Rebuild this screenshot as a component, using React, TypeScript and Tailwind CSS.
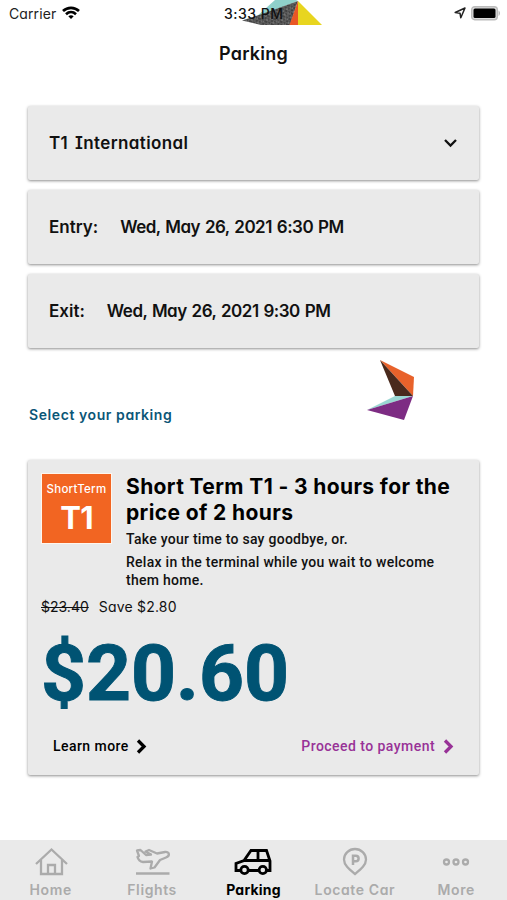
import type { ReactNode } from "react";

const display = "font-[Inter,sans-serif] [font-feature-settings:'cv11','cv08']";
const card = "bg-[#eaeaea] rounded-[2px] shadow-[0_1px_3px_rgba(0,0,0,0.45)]";

const StatusBar = () => (
    <header className="relative flex h-[26px] items-center justify-between pl-[9px] pr-[6px] font-[Inter,sans-serif] text-[14px] text-[#222]">
        <svg className="absolute left-[242px] top-0" width="80" height="25" viewBox="0 0 80 25">
            <defs>
                <pattern id="grain" width="7" height="6" patternUnits="userSpaceOnUse" patternTransform="rotate(24)">
                    <rect width="7" height="6" fill="#5c5c5c" />
                    <path d="M0 1h2M4 0v2M1 4h3M6 3v2" stroke="#292929" strokeWidth="1" />
                    <path d="M2 2h2M5 5h1M0 5h1" stroke="#959595" strokeWidth="0.8" />
                </pattern>
            </defs>
            <path d="M33 0H54L56 1L14 17Z" fill="#8fd0ca" />
            <path d="M56 1L17 15L0 20.500L19 25H48Z" fill="url(#grain)" />
            <path d="M56 1V25H47.500Z" fill="#e95725" />
            <path d="M56 1L80 25H56Z" fill="#e8d51f" />
        </svg>
        <div className="flex items-center gap-[6px]">
            <span className="tracking-[0.1px]">Carrier</span>
            <svg width="18" height="14" viewBox="0 0 18 14" fill="none" stroke="#000" strokeWidth="2.700">
                <path d="M1 5C5.500 0.800 12.500 0.800 17 5" />
                <path d="M4 8.200C7 5.500 11 5.500 14 8.200" />
                <path d="M6.300 10.300C8 9 10 9 11.700 10.300L9 13Z" fill="#000" stroke="none" />
            </svg>
        </div>
        <span className="absolute left-[224px] top-[4px] text-[14px] font-medium leading-[20px] tracking-[0.5px] text-[#111]">3:33 PM</span>
        <div className="flex items-center gap-[5px]">
            <svg width="12" height="12" viewBox="0 0 12 12" fill="none" stroke="#222" strokeWidth="1.500" strokeLinejoin="round">
                <path d="M1.200 5.500L11 1L6.800 10.800L6 6.200Z" />
            </svg>
            <svg width="30" height="15" viewBox="0 0 30 15">
                <rect x="0.700" y="0.700" width="25.600" height="13" rx="3" fill="#ddd" stroke="#bbb" strokeWidth="1.400" />
                <rect x="2.500" y="2.500" width="22" height="9.500" rx="1.500" fill="#000" />
                <path d="M27.500 4.500C29.500 5.500 29.500 9 27.500 10Z" fill="#bbb" />
            </svg>
        </div>
    </header>
);

const DateField = ({ label, value }: { label: string; value: string }) => (
    <div className={`${card} flex h-[74px] items-center gap-[22px] px-[21px] pt-[2px]`}>
        <span>{label}</span>
        <span className="tracking-[-0.5px] [word-spacing:1.1px]">{value}</span>
    </div>
);

const Arrow = () => (
    <svg width="11" height="15" viewBox="0 0 11 15" fill="none" stroke="currentColor" strokeWidth="3.300">
        <path d="M2 1.500L8 7.500L2 13.500" />
    </svg>
);

const Tab = ({ label, active, children }: { label: string; active?: boolean; children: ReactNode }) => (
    <div className={active ? "flex flex-col items-center text-black" : "flex flex-col items-center text-[#ababab]"}>
        <svg width="40" height="32" viewBox="0 0 40 32" fill="none" stroke="currentColor" strokeWidth="2.300" className="mt-[6px]">
            {children}
        </svg>
        <span className={active ? "mt-px whitespace-nowrap text-[14px] font-bold leading-[22px] tracking-[0.2px]" : "mt-px whitespace-nowrap text-[14px] font-semibold leading-[22px] tracking-[0.6px]"}>
            {label}
        </span>
    </div>
);

const App = () => {
    return (
        <div className={`${display} flex h-[900px] w-[507px] flex-col overflow-hidden bg-white text-[#111]`}>
            <StatusBar />
            <h1 className="mt-[15px] text-center text-[18px] font-semibold leading-[26px] tracking-[0.2px]">Parking</h1>

            <div className="mx-[28px] mt-[39px] flex flex-col gap-[10px] text-[17px] font-semibold">
                <div className={`${card} flex h-[74px] items-center justify-between px-[21px]`}>
                    <span className="pt-[2px] tracking-[0.4px] [word-spacing:2px]">T1 International</span>
                    <svg width="15" height="10" viewBox="0 0 15 10" fill="none" stroke="#111" strokeWidth="2.300">
                        <path d="M2 2L7.500 7.500L13 2" />
                    </svg>
                </div>
                <DateField label="Entry:" value="Wed, May 26, 2021 6:30 PM" />
                <DateField label="Exit:" value="Wed, May 26, 2021 9:30 PM" />
            </div>

            <div className="relative mx-[28px] h-[112px]">
                <p className="absolute left-[1px] top-[57px] text-[14px] font-semibold leading-[20px] tracking-[0.58px] text-[#0b5677]">Select your parking</p>
                <svg className="absolute left-[339px] top-[12px]" width="48" height="60" viewBox="0 0 48 60">
                    <path d="M13 0L47 17L46 36Z" fill="#e8622b" />
                    <path d="M13 0L46 36H28Z" fill="#49291c" />
                    <path d="M28 36H46L0 50Z" fill="#9ad6d2" />
                    <path d="M46 36L0 50L37 60Z" fill="#7d2c83" />
                </svg>
            </div>

            <section className={`${card} mx-[28px] flex h-[315px] flex-col`}>
                <div className="flex pl-[13px] pt-[13px]">
                    <div className="flex h-[71px] w-[71px] shrink-0 flex-col items-center border border-[#fff6ed] bg-[#f26522] text-white">
                        <span className="mt-[6px] text-[11.500px] font-medium leading-[18px] tracking-[0.25px]">ShortTerm</span>
                        <span className="mt-[1px] text-[31px] font-bold leading-[38px] tracking-[-0.8px]">T1</span>
                    </div>
                    <div className="ml-[14px] whitespace-nowrap font-[Roboto,sans-serif] text-[14px] font-medium leading-[18px]">
                        <h2 className="mt-px font-[Inter,sans-serif] text-[21px] font-bold leading-[26px] tracking-[0.38px] text-black">
                            Short Term T1 - 3 hours for the<br />price of 2 hours
                        </h2>
                        <p className="mt-[4px] tracking-[0.27px]">Take your time to say goodbye, or.</p>
                        <p className="mt-[5px] tracking-[0.27px]">Relax in the terminal while you wait to welcome<br />them home.</p>
                    </div>
                </div>
                <div className="ml-[13px] mt-[9px] flex gap-[10px] text-[14px] leading-[18px]">
                    <span className="line-through">$23.40</span>
                    <span className="tracking-[0.2px]">Save $2.80</span>
                </div>
                <div className="ml-[13px] mt-[17px] font-[Roboto,sans-serif] text-[78.500px] font-bold leading-[80px] text-[#005373] [-webkit-text-stroke:1px_#005373]">$20.60</div>
                <div className="mt-[23px] flex justify-between pl-[25px] pr-[25px] font-[Roboto,sans-serif] text-[14px] font-medium leading-[20px] tracking-[0.45px]">
                    <a className="flex items-center gap-[7px] text-black">Learn more <Arrow /></a>
                    <a className="flex items-center gap-[8px] text-[#983297]">Proceed to payment <Arrow /></a>
                </div>
            </section>

            <nav className="mt-auto grid h-[60px] grid-cols-5 bg-[#eaeaea]">
                <Tab label="Home">
                    <path d="M5 18L20.500 3.500L36 18M10 14V28H31V14" />
                    <path d="M17 28V19H24V28" />
                </Tab>
                <Tab label="Flights">
                    <path d="M4 27.500H37.500" strokeWidth="2.500" />
                    <path strokeLinejoin="round" d="M5 4.500L8.500 4L14 9L19 8.500L13.500 5.500L17 4L25 7.500L33 6C38 5.500 38 10 34 11.500L28 14L22.500 21.500L18.500 22.500L20 15.500L11 16C8 15.500 6 13 5.500 11L7 10Z" />
                </Tab>
                <Tab label="Parking" active>
                    <g strokeWidth="2.800">
                        <path d="M8 24.500H3V17.500L11 14.500L18 4.500H33.500L37 15V24.500H34M15.500 24.500H26" />
                        <path d="M11 14.500H37M25 4.500V14.500" />
                        <circle cx="11.500" cy="24" r="3.700" />
                        <circle cx="29.800" cy="24" r="3.700" />
                    </g>
                </Tab>
                <Tab label="Locate Car">
                    <path d="M20 28C14 23 9 19 9 13.500A11 10.500 0 0 1 31 13.500C31 19 26 23 20 28Z" />
                    <path d="M18 19V9.700H20.800A2.800 2.800 0 0 1 20.800 15.300H18" strokeWidth="2.500" />
                </Tab>
                <Tab label="More">
                    <circle cx="10.500" cy="16" r="2.500" />
                    <circle cx="20" cy="16" r="2.500" />
                    <circle cx="29.500" cy="16" r="2.500" />
                </Tab>
            </nav>
        </div>
    );
};

export default App;
